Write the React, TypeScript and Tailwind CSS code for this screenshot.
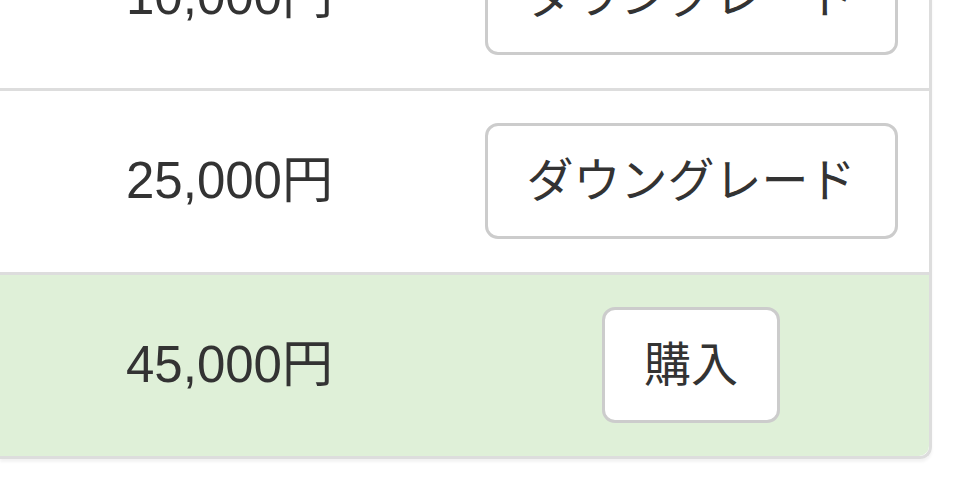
const rows = [
  { price: "10,000円", label: "ダウングレード", active: false },
  { price: "25,000円", label: "ダウングレード", active: false },
  { price: "45,000円", label: "購入", active: true },
];

export default function App() {
  return (
    <div
      className="h-[499px] w-[960px] overflow-hidden bg-white text-[#333]"
      style={{ fontFamily: '"Liberation Sans", "Noto Sans CJK JP", sans-serif' }}
    >
      <div className="-mt-[93px] w-[932px] rounded-br-[12px] border-r-[3px] border-b-[3px] border-[#ddd] shadow-[0_3px_3px_rgba(0,0,0,0.05)]">
        {rows.map((row, i) => (
          <div
            key={i}
            className={`grid grid-cols-[459px_464px_1fr] items-center pt-[32px] pb-[33px] ${
              i < rows.length - 1 ? "border-b-[3px] border-[#ddd]" : "rounded-br-[10px]"
            } ${row.active ? "bg-[#dff0d8]" : ""}`}
          >
            <div className="text-center text-[51px] leading-[68px]">{row.price}</div>
            <div className="flex justify-center">
              <button className="rounded-[13px] border-[3px] border-[#ccc] bg-white px-[39px] py-[21px] text-[47px] leading-[68px] text-[#333]">
                {row.label}
              </button>
            </div>
            <div />
          </div>
        ))}
      </div>
    </div>
  );
}
